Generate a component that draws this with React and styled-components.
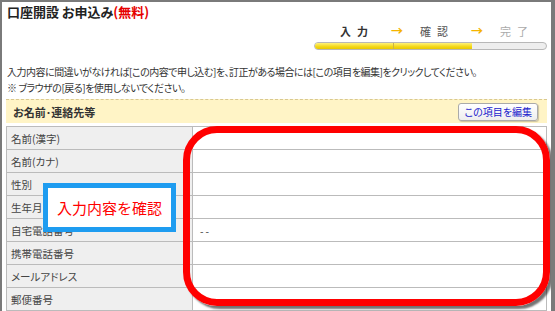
import styled, { createGlobalStyle } from "styled-components";

const GlobalStyle = createGlobalStyle`
    body {
        margin: 0;
        background: #fff;
        font-family: "Noto Sans CJK JP", "Liberation Sans", sans-serif;
        color: #333;
    }
`

const Page = styled.div`
    position: relative;
    width: 555px;
    height: 311px;
    box-sizing: border-box;
    border-left: 2px solid #7a7a7a;
    border-top: 2px solid #7a7a7a;
    border-right: 4px solid #7a7a7a;
    overflow: hidden;
    display: flex;
    flex-direction: column;
`

const Title = styled.h1`
    margin: 0;
    padding: 1px 0 0 5px;
    font-size: 13px;
    line-height: 17px;
    font-weight: bold;
    color: #222;
    font-feature-settings: "palt";
`

const Free = styled.span`
    color: #e60000;
`

const Progress = styled.div`
    align-self: flex-end;
    width: 233px;
    margin: 4px 4px 0 0;
    display: flex;
    flex-direction: column;
    gap: 4px;
`

const Steps = styled.div`
    display: flex;
    align-items: center;
    padding-left: 26px;
    gap: 17px;
    font-size: 11px;
    line-height: 14px;
`

const Step = styled.span`
    letter-spacing: 6px;
    font-weight: ${({ state }) => (state === "done" ? "bold" : "normal")};
    color: ${({ state }) =>
        state === "done" ? "#333" : state === "current" ? "#555" : "#aaa"};
`

const Arrow = styled.span`
    color: #f5b400;
    font-weight: bold;
    font-size: 12px;
`

const Bar = styled.div`
    height: 6px;
    border: 1px solid #b8b8b8;
    border-radius: 5px;
    background: #eeeeee;
    display: flex;
    overflow: hidden;
`

const BarPart = styled.div`
    width: 78px;
    background: linear-gradient(#fff27a, #f3d81a 60%, #e8c800);
    border-right: 1px solid #c9b34a;
    &:nth-child(2) {
        border-right: none;
    }
`

const Notes = styled.div`
    margin-top: 14px;
    padding-left: 5px;
    font-size: 10px;
    line-height: 16px;
    letter-spacing: -0.5px;
    color: #333;
    font-feature-settings: "palt";
`

const SectionHeader = styled.div`
    margin: 3px 4px 0;
    height: 28px;
    box-sizing: border-box;
    border-top: 1px dashed #d9c88f;
    background: #fff4c6;
    display: flex;
    align-items: center;
    justify-content: space-between;
    padding: 0 9px 0 7px;
`

const SectionTitle = styled.span`
    font-size: 11px;
    font-weight: bold;
    color: #333;
    font-feature-settings: "palt";
`

const EditButton = styled.button`
    height: 18px;
    padding: 0 5px;
    border: 1px solid #aaa;
    border-radius: 3px;
    background: linear-gradient(#ffffff, #eeeeee);
    box-shadow: 1px 1px 1px rgba(0, 0, 0, 0.2);
    color: #2222cc;
    font-family: inherit;
    font-size: 10px;
    font-feature-settings: "palt";
`

const Table = styled.div`
    margin: 3px 4px 0;
    border-top: 1px solid #bbb;
    border-left: 1px solid #bbb;
    border-right: 1px solid #bbb;
`

const Row = styled.div`
    display: grid;
    grid-template-columns: 186px 1fr;
    height: 23px;
    box-sizing: border-box;
    border-bottom: 1px solid #bbb;
`

const Label = styled.div`
    background: #efefef;
    border-right: 1px solid #bbb;
    padding-left: 4px;
    display: flex;
    align-items: center;
    font-size: 10.5px;
    color: #444;
    font-feature-settings: "palt";
`

const Value = styled.div`
    padding-left: 7px;
    display: flex;
    align-items: center;
    font-size: 10px;
    color: #333;
    letter-spacing: 2px;
`

const Highlight = styled.div`
    position: absolute;
    left: 181px;
    top: 124px;
    width: 367px;
    height: 180px;
    box-sizing: border-box;
    border: 7px solid #ff0000;
    border-radius: 34px;
    box-shadow: 3px 3px 2px rgba(0, 0, 0, 0.55);
`

const Callout = styled.div`
    position: absolute;
    left: 41px;
    top: 181px;
    width: 133px;
    height: 49px;
    box-sizing: border-box;
    border: 5px solid #1e9cf0;
    background: #fff;
    display: flex;
    align-items: center;
    justify-content: center;
    color: #ff0000;
    font-size: 15px;
`

const rows = [
    ["名前(漢字)", ""],
    ["名前(カナ)", ""],
    ["性別", ""],
    ["生年月日", ""],
    ["自宅電話番号", "--"],
    ["携帯電話番号", ""],
    ["メールアドレス", ""],
    ["郵便番号", ""],
]

function App() {
    return (
        <Page>
            <GlobalStyle />
            <Title>
                口座開設 お申込み<Free>(無料)</Free>
            </Title>

            <Progress>
                <Steps>
                    <Step state="done">入力</Step>
                    <Arrow>→</Arrow>
                    <Step state="current">確認</Step>
                    <Arrow>→</Arrow>
                    <Step state="todo">完了</Step>
                </Steps>
                <Bar>
                    <BarPart />
                    <BarPart />
                </Bar>
            </Progress>

            <Notes>
                入力内容に間違いがなければ[この内容で申し込む]を、訂正がある場合には[この項目を編集]をクリックしてください。
                <br />
                ※ ブラウザの[戻る]を使用しないでください。
            </Notes>

            <SectionHeader>
                <SectionTitle>お名前･連絡先等</SectionTitle>
                <EditButton>この項目を編集</EditButton>
            </SectionHeader>

            <Table>
                {rows.map(([label, value]) => (
                    <Row key={label}>
                        <Label>{label}</Label>
                        <Value>{value}</Value>
                    </Row>
                ))}
            </Table>

            <Highlight />
            <Callout>入力内容を確認</Callout>
        </Page>
    );
}

export default App;
